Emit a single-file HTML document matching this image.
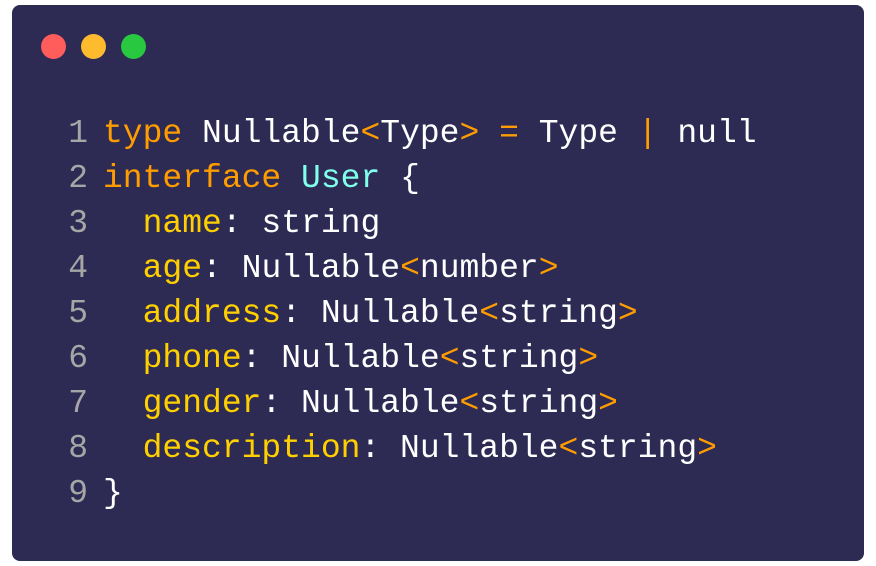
<!DOCTYPE html>
<html><head><style>
html,body{margin:0;padding:0;background:#fff;width:876px;height:566px;overflow:hidden}
.card{position:absolute;left:12px;top:5px;width:852px;height:556px;background:#2d2a54;border-radius:8px}
.dot{position:absolute;top:29px;width:25px;height:25px;border-radius:50%}
pre{position:absolute;left:0;top:106px;margin:0;font-family:"Liberation Mono","DejaVu Sans Mono",monospace;font-size:33px;line-height:45px;color:#fff}
.ln{display:inline-block;width:76px;text-align:right;color:#a6a6a6;margin-right:15px}
.o{color:#ff9d00}.y{color:#ffd000}.c{color:#80ffea}
</style></head><body>
<div class="card">
<div class="dot" style="left:29px;background:#ff5c5c"></div>
<div class="dot" style="left:69px;background:#ffbb2e"></div>
<div class="dot" style="left:109px;background:#28c840"></div>
<pre><span class="ln">1</span><span class="o">type</span> Nullable<span class="o">&lt;</span>Type<span class="o">&gt;</span> <span class="o">=</span> Type <span class="o">|</span> null
<span class="ln">2</span><span class="o">interface</span> <span class="c">User</span> {
<span class="ln">3</span>  <span class="y">name</span>: string
<span class="ln">4</span>  <span class="y">age</span>: Nullable<span class="o">&lt;</span>number<span class="o">&gt;</span>
<span class="ln">5</span>  <span class="y">address</span>: Nullable<span class="o">&lt;</span>string<span class="o">&gt;</span>
<span class="ln">6</span>  <span class="y">phone</span>: Nullable<span class="o">&lt;</span>string<span class="o">&gt;</span>
<span class="ln">7</span>  <span class="y">gender</span>: Nullable<span class="o">&lt;</span>string<span class="o">&gt;</span>
<span class="ln">8</span>  <span class="y">description</span>: Nullable<span class="o">&lt;</span>string<span class="o">&gt;</span>
<span class="ln">9</span>}</pre>
</div>
</body></html>
